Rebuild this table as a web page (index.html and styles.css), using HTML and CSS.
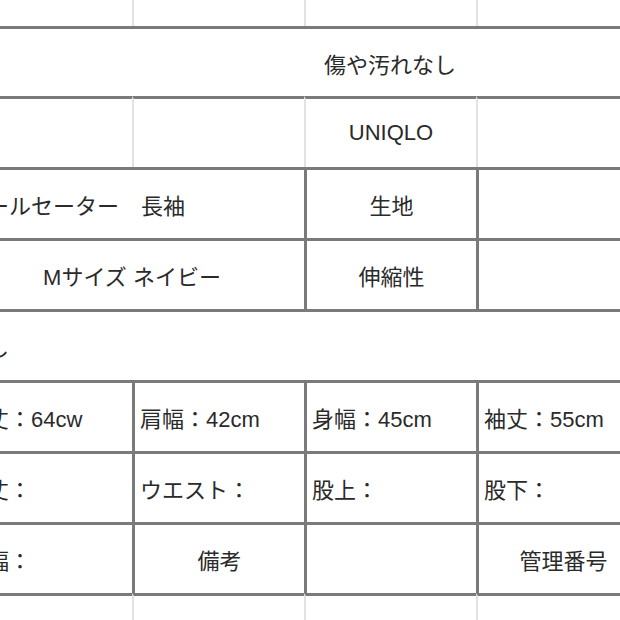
FILE: index.html
```html
<!DOCTYPE html>
<html lang="ja">
<head>
<meta charset="utf-8">
<title>商品情報</title>
<link rel="stylesheet" href="styles.css">
</head>
<body>
<div class="sheet">
  <div class="c"></div><div class="c gl"></div><div class="c gl"></div><div class="c gl"></div>

  <div class="c t"></div><div class="c t span3 center">傷や汚れなし</div>

  <div class="c t"></div><div class="c t gl"></div><div class="c t gl center">UNIQLO</div><div class="c t gl"></div>

  <div class="c t span2">ウールセーター　長袖</div><div class="c t bl center">生地</div><div class="c t bl"></div>

  <div class="c t span2 center">Mサイズ ネイビー</div><div class="c t bl center">伸縮性</div><div class="c t bl"></div>

  <div class="c t span4">なし</div>

  <div class="c t">着丈：64cw</div><div class="c t bl">肩幅：42cm</div><div class="c t bl">身幅：45cm</div><div class="c t bl">袖丈：55cm</div>

  <div class="c t">総丈：</div><div class="c t bl">ウエスト：</div><div class="c t bl">股上：</div><div class="c t bl">股下：</div>

  <div class="c t">裾幅：</div><div class="c t bl center">備考</div><div class="c t bl"></div><div class="c t bl center">管理番号</div>

  <div class="c t"></div><div class="c t gl"></div><div class="c t gl"></div><div class="c t gl"></div>
</div>
</body>
</html>
```

FILE: styles.css
```css
html, body {
  margin: 0;
  padding: 0;
  overflow: hidden;
  background: #ffffff;
}

.sheet {
  display: grid;
  grid-template-columns: repeat(4, 172px);
  grid-template-rows: 71px 70px;
  grid-auto-rows: 71px;
  margin: -45px 0 0 -40px;
  font-family: "Liberation Sans", "Noto Sans CJK JP", sans-serif;
  font-size: 22px;
  color: #2a2a2a;
}

.c {
  box-sizing: border-box;
  display: flex;
  align-items: center;
  padding: 0 5px;
  white-space: nowrap;
  overflow: visible;
}

.t {
  border-top: 3px solid #7a7a7a;
}

.bl {
  border-left: 3px solid #7a7a7a;
}

.gl {
  border-left: 2px solid #e2e2e2;
}

.center {
  justify-content: center;
}

.span2 {
  grid-column: span 2;
}

.span3 {
  grid-column: span 3;
}

.span4 {
  grid-column: span 4;
}
```
